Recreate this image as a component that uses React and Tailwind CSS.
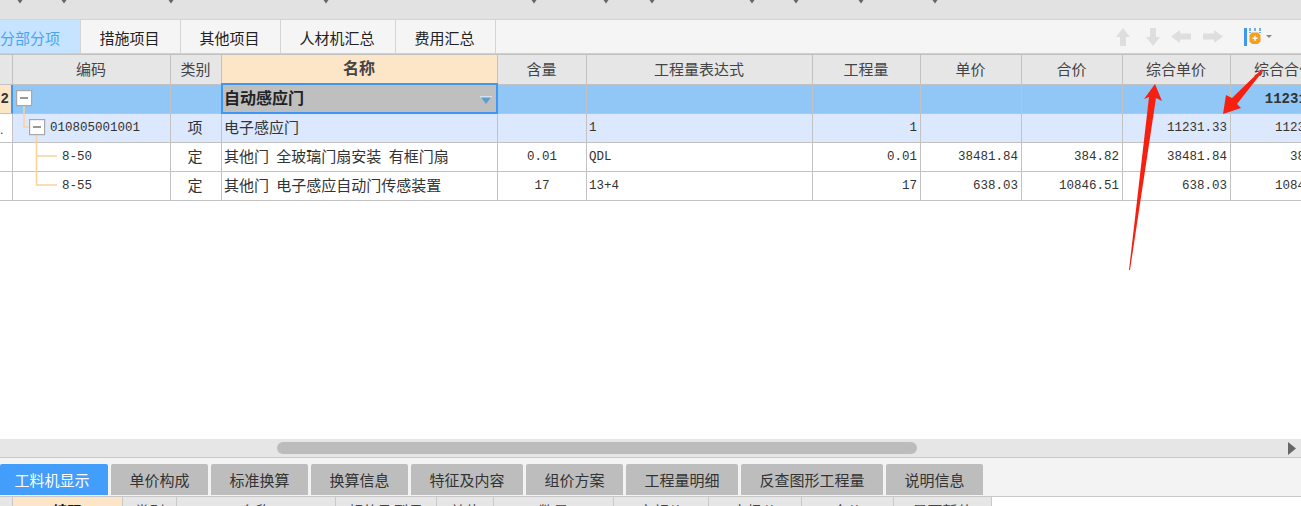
const cn = (...parts) => parts.filter(Boolean).join(' ')

const SANS = "font-['Noto_Sans_CJK_SC',sans-serif]"
const MONO = "font-['Liberation_Mono','Noto_Sans_CJK_SC',monospace]"

const GRID_COLS = 'grid w-[1339px] grid-cols-[13px_158px_51px_276px_89px_226px_108px_101px_101px_108px_108px]'

const topTabs = [
  { label: '分部分项', width: 'w-[81px]', active: true },
  { label: '措施项目', width: 'w-[100px]' },
  { label: '其他项目', width: 'w-[100px]' },
  { label: '人材机汇总', width: 'w-[115px]' },
  { label: '费用汇总', width: 'w-[100px]' },
]

const bottomTabs = [
  { label: '工料机显示', width: 'w-[108px]', active: true },
  { label: '单价构成', width: 'w-[97px]' },
  { label: '标准换算', width: 'w-[97px]' },
  { label: '换算信息', width: 'w-[97px]' },
  { label: '特征及内容', width: 'w-[112px]' },
  { label: '组价方案', width: 'w-[97px]' },
  { label: '工程量明细', width: 'w-[112px]' },
  { label: '反查图形工程量', width: 'w-[142px]' },
  { label: '说明信息', width: 'w-[97px]' },
]

const headers = ['', '编码', '类别', '名称', '含量', '工程量表达式', '工程量', '单价', '合价', '综合单价', '综合合价']

const rows = [
  { code: '010805001001', indent: 'pl-[37px]', kind: '项', name: '电子感应门', qtyExpr: '1', qty: '1', unitSum: '11231.33', total: '11231.33', bg: 'bg-[#dbe8fd]', index: '.' },
  { code: '8-50', indent: 'pl-[49px]', kind: '定', name: '其他门 全玻璃门扇安装 有框门扇', content: '0.01', qtyExpr: 'QDL', qty: '0.01', price: '38481.84', sum: '384.82', unitSum: '38481.84', total: '384.82', bg: 'bg-white' },
  { code: '8-55', indent: 'pl-[49px]', kind: '定', name: '其他门 电子感应自动门传感装置', content: '17', qtyExpr: '13+4', qty: '17', price: '638.03', sum: '10846.51', unitSum: '638.03', total: '10846.51', bg: 'bg-white' },
]

// lower grid is cut off by the window, only the top of its labels shows
const materialCols = [
  { label: '', width: 'w-[13px]' },
  { label: '编码', width: 'w-[110px]', hot: true },
  { label: '类别', width: 'w-[54px]' },
  { label: '名称', width: 'w-[159px]' },
  { label: '规格及型号', width: 'w-[101px]' },
  { label: '单位', width: 'w-[57px]' },
  { label: '数量', width: 'w-[120px]' },
  { label: '定额价', width: 'w-[95px]' },
  { label: '市场价', width: 'w-[93px]' },
  { label: '合价', width: 'w-[92px]' },
  { label: '是否暂估', width: 'w-[98px]' },
]

const menuMarks = [20, 64, 171, 326, 534, 606, 652, 752, 796, 861, 935]

function Cell({ className, children }) {
  return (
    <div className={cn('flex min-w-0 items-center overflow-hidden whitespace-nowrap border-r border-b border-[#c2c2c2]', className)}>
      {children}
    </div>
  )
}

function NumCell({ children, bold }) {
  return (
    <Cell className={cn('justify-end text-[#333]', MONO, bold ? 'pr-[6px] text-[14px] font-bold' : 'pr-[3px] text-[12.5px]')}>
      {children}
    </Cell>
  )
}

function MenuMarks() {
  return (
    <svg width="1301" height="5" className="block">
      {menuMarks.map((x) => (
        <polygon key={x} points={`${x - 2.5},0 ${x + 2.5},0 ${x},3.5`} fill="#666" />
      ))}
    </svg>
  )
}

function BlockArrow({ dir }) {
  const vertical = dir === 'up' || dir === 'down'
  const paths = {
    up: 'M7 0 L14 9 L10 9 L10 18 L4 18 L4 9 L0 9 Z',
    down: 'M4 0 L10 0 L10 9 L14 9 L7 18 L0 9 L4 9 Z',
    left: 'M0 6.5 L9 0 L9 3.5 L20 3.5 L20 9.5 L9 9.5 L9 13 Z',
    right: 'M20 6.5 L11 0 L11 3.5 L0 3.5 L0 9.5 L11 9.5 L11 13 Z',
  }
  return (
    <svg width={vertical ? 14 : 20} height={vertical ? 18 : 13} viewBox={vertical ? '0 0 14 18' : '0 0 20 13'}>
      <path d={paths[dir]} fill="#dedede" />
    </svg>
  )
}

function ColumnSettingsIcon() {
  return (
    <svg width="29" height="20" viewBox="0 0 29 20">
      <rect x="0" y="1" width="3" height="18" fill="#3f97f5" />
      <path d="M6 1v5M11 1v3M16 1v5" stroke="#4a9ef5" strokeWidth="1.6" strokeDasharray="3 1" />
      <polygon points="8,5.5 14,5.5 16.5,8 16.5,14.5 14,17 8,17 5.5,14.5 5.5,8" fill="#f59f1c" />
      <path d="M11 8.8v5M8.5 11.3h5" stroke="#fff" strokeWidth="1.4" />
      <polygon points="22,8 28,8 25,11" fill="#888" />
    </svg>
  )
}

// connector lines and collapse boxes of the tree column
function TreeLines() {
  return (
    <svg width="70" height="116" className="pointer-events-none absolute top-0 left-0">
      <g fill="none" stroke="#fcd29a" strokeWidth="1.5">
        <path d="M24 21V42H29" />
        <path d="M36.5 50V100H57M36.5 71H57" />
      </g>
      <g fill="#fff" stroke="#a8a8a8" strokeWidth="1.2">
        <rect x="16.6" y="5.6" width="15" height="15" />
        <rect x="29.6" y="34.6" width="15" height="15" />
      </g>
      <path d="M20 13h8M33 42h8" stroke="#333" strokeWidth="1.2" />
    </svg>
  )
}

function Arrows() {
  return (
    <svg width="1301" height="506" className="pointer-events-none absolute top-0 left-0">
      <polygon points="1155,84 1162,101 1156,98 1130,270 1129,270 1149,97 1144,99" fill="#f5200f" />
      <polygon points="1262,69 1263,71 1237,104 1241,108 1223,114 1226,95 1232,98" fill="#f5200f" />
    </svg>
  )
}

export default function App() {
  return (
    <div className={cn('relative flex h-[506px] w-[1301px] flex-col overflow-hidden bg-white text-[15px] text-[#333]', SANS)}>
      {/* menu strip */}
      <div className="h-[20px] shrink-0 border-b border-[#d4d4d4] bg-[#e2e2e2]">
        <MenuMarks />
      </div>

      {/* page tabs + toolbar */}
      <div className="flex h-[34px] shrink-0 items-stretch border-b border-[#cfcfcf] bg-[#f5f5f5]">
        {topTabs.map((tab) => (
          <div
            key={tab.label}
            className={cn(
              'flex items-center border-r border-[#d4d4d4] pt-[3px]',
              tab.width,
              tab.active ? 'justify-start bg-[#c6e4ff] text-[#4aa3f5]' : 'justify-center pr-[2px] text-[#222]',
            )}
          >
            {tab.label}
          </div>
        ))}
        <div className="ml-auto flex items-center pr-[28px]">
          <div className="flex items-center gap-[16px]">
            <BlockArrow dir="up" />
            <BlockArrow dir="down" />
          </div>
          <div className="ml-[11px] flex items-center gap-[12px]">
            <BlockArrow dir="left" />
            <BlockArrow dir="right" />
          </div>
          <div className="ml-[21px] flex items-center">
            <ColumnSettingsIcon />
          </div>
        </div>
      </div>

      {/* main grid */}
      <div className="shrink-0 overflow-hidden">
        <div className={cn(GRID_COLS, 'h-[31px] border-t border-[#c2c2c2] bg-[#e6e6e6]')}>
          {headers.map((label, i) => (
            <Cell
              key={i}
              className={cn(
                'justify-center pr-px text-[#444]',
                label === '名称' && 'bg-[#fde5c8] pr-[2px] pb-[5px] text-[16px] font-bold text-[#111]',
              )}
            >
              {label}
            </Cell>
          ))}
        </div>

        <div className="relative">
          <div className={cn(GRID_COLS, 'h-[29px] bg-[#90c7f7]')}>
            <div className="flex items-center justify-end overflow-hidden border-r-2 border-b border-r-[#3f97f5] border-b-[#c2c2c2] bg-[#fde5c8] pr-[2px]">
              <span className={cn(MONO, 'text-[14px] font-bold')}>2</span>
            </div>
            <Cell />
            <Cell />
            <div className="z-10 -mt-[2px] -ml-px flex items-center justify-between border-2 border-[#3f97f5] bg-[#bfbfbf] pr-[4px] pl-[1px] text-[16px] font-bold text-[#222]">
              <span className="-mt-[3px]">自动感应门</span>
              <svg width="12" height="8" viewBox="0 0 12 8" className="mt-[2px]">
                <polygon points="0,0 12,0 6,8" fill="#5b9ec9" />
                <rect x="0" y="0" width="12" height="1.5" fill="#cfe3f0" />
              </svg>
            </div>
            <Cell />
            <Cell />
            <Cell />
            <Cell />
            <Cell />
            <Cell />
            <NumCell bold>11231.33</NumCell>
          </div>

          {rows.map((row) => (
            <div key={row.code} className={cn(GRID_COLS, 'h-[29px]', row.bg)}>
              <div className={cn('flex items-center overflow-hidden border-r border-b border-[#c2c2c2] bg-white pt-[3px] text-[12px] text-[#333]', "font-['Liberation_Sans',sans-serif]")}>
                {row.index}
              </div>
              <Cell className={cn(row.indent, MONO, 'text-[12.5px]')}>{row.code}</Cell>
              <Cell className="justify-center pr-[2px] pb-[2px]">{row.kind}</Cell>
              <Cell className="pb-[2px] pl-[2px] [word-spacing:4px]">{row.name}</Cell>
              <Cell className={cn('justify-center text-[12.5px]', MONO)}>{row.content}</Cell>
              <Cell className={cn('pl-[2px] text-[12.5px]', MONO)}>{row.qtyExpr}</Cell>
              <NumCell>{row.qty}</NumCell>
              <NumCell>{row.price}</NumCell>
              <NumCell>{row.sum}</NumCell>
              <NumCell>{row.unitSum}</NumCell>
              <NumCell>{row.total}</NumCell>
            </div>
          ))}

          <TreeLines />
        </div>
      </div>

      <div className="min-h-0 flex-1" />

      {/* horizontal scrollbar */}
      <div className="flex h-[19px] shrink-0 items-center border-b border-[#c8c8c8] bg-[#e6e6e6] pr-[5px] pl-[277px]">
        <div className="h-[12px] w-[640px] rounded-full bg-[#bcbcbc]" />
        <svg width="8" height="13" viewBox="0 0 8 13" className="ml-auto">
          <polygon points="0,0 8,6.5 0,13" fill="#666" />
        </svg>
      </div>

      {/* detail tabs */}
      <div className="flex h-[39px] shrink-0 items-end gap-[3px] border-b border-[#c8c8c8] bg-[#f3f3f3] pb-px">
        {bottomTabs.map((tab) => (
          <div
            key={tab.label}
            className={cn(
              'flex h-[31px] items-center justify-center rounded-t-[2px] pt-[2px]',
              tab.width,
              tab.active ? 'bg-[#429dfb] pr-[4px] text-white' : 'bg-[#bdbdbd] text-[#333]',
            )}
          >
            {tab.label}
          </div>
        ))}
      </div>

      {/* material grid header */}
      <div className="flex h-[9px] shrink-0 items-start overflow-hidden">
        {materialCols.map((col, i) => (
          <div
            key={i}
            className={cn(
              'flex h-[29px] shrink-0 items-center justify-center border-r border-[#c8c8c8]',
              col.width,
              col.hot ? 'bg-[#fde5c8] font-bold text-[#111]' : 'bg-[#e6e6e6] text-[#444]',
            )}
          >
            {col.label}
          </div>
        ))}
      </div>

      <Arrows />
    </div>
  )
}
